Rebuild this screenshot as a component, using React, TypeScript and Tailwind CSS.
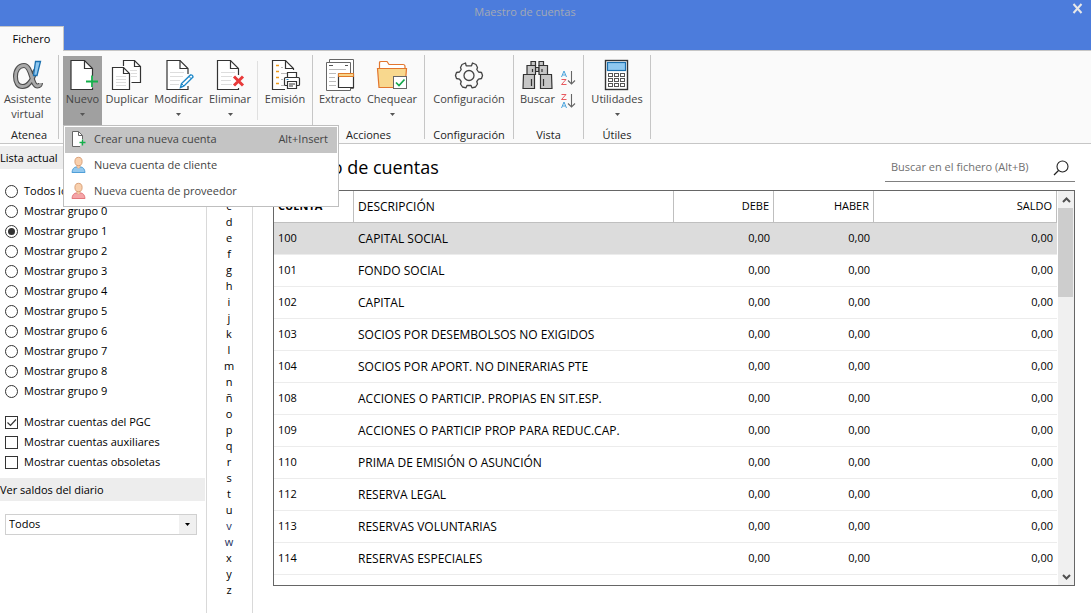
import React, { useState } from "react";
import { clsx } from "clsx";

const accounts = [
  { code: "100", name: "CAPITAL SOCIAL" },
  { code: "101", name: "FONDO SOCIAL" },
  { code: "102", name: "CAPITAL" },
  { code: "103", name: "SOCIOS POR DESEMBOLSOS NO EXIGIDOS" },
  { code: "104", name: "SOCIOS POR APORT. NO DINERARIAS PTE" },
  { code: "108", name: "ACCIONES O PARTICIP. PROPIAS EN SIT.ESP." },
  { code: "109", name: "ACCIONES O PARTICIP PROP PARA REDUC.CAP." },
  { code: "110", name: "PRIMA DE EMISIÓN O ASUNCIÓN" },
  { code: "112", name: "RESERVA LEGAL" },
  { code: "113", name: "RESERVAS VOLUNTARIAS" },
  { code: "114", name: "RESERVAS ESPECIALES" },
];

const groups = [
  "Todos los grupos",
  ...[0, 1, 2, 3, 4, 5, 6, 7, 8, 9].map((n) => `Mostrar grupo ${n}`),
];

const letters = "abcdefghijklmnñopqrstuvwxyz".split("");

/* ---------- Icons ---------- */

function Icon({ children }: { children: React.ReactNode }) {
  return (
    <svg viewBox="0 0 32 32" className="size-8 shrink-0" fill="none" aria-hidden="true">
      {children}
    </svg>
  );
}

function AlphaIcon() {
  return (
    <Icon>
      <path d="M23.500 11 C21 20 17.500 27.500 10.500 27.500 C6 27.500 3.500 23.500 3.500 17.500 C3.500 11 7 6.500 12 6.500 C20 6.500 19 27 25.500 27 C27.500 27 28.500 25.500 28.500 24" stroke="#4d4d4d" strokeWidth="5" />
      <path d="M23.500 11 C21 20 17.500 27.500 10.500 27.500 C6 27.500 3.500 23.500 3.500 17.500 C3.500 11 7 6.500 12 6.500 C20 6.500 19 27 25.500 27 C27.500 27 28.500 25.500 28.500 24" stroke="#a9a9a9" strokeWidth="2.800" />
      <path d="M23.500 2.500 H28.500 L25 16.500 H21.500 Z" fill="#8fc8f0" stroke="#1b6fae" strokeWidth="1.300" />
    </Icon>
  );
}

function NewIcon() {
  return (
    <Icon>
      <path d="M4 1.500 H17.500 L25.500 9.500 V30.500 H4 Z" fill="#fff" />
      <path d="M25.500 17 V9.500 L17.500 1.500 H4 V30.500 H25.500 V28.500" stroke="#333" strokeWidth="1.200" />
      <path d="M17.500 1.500 V9.500 H25.500" stroke="#333" strokeWidth="1.200" />
      <path d="M25 16.500 V28 M19 22.500 H31" stroke="#14b04b" strokeWidth="1.800" />
    </Icon>
  );
}

function DuplicateIcon() {
  return (
    <Icon>
      <path d="M12.500 7 V1.500 H23.500 L29.500 7.500 V23.500 H20.500" fill="#fff" stroke="#333" strokeWidth="1.200" />
      <path d="M23.500 1.500 V7.500 H29.500" stroke="#333" strokeWidth="1.200" />
      <path d="M19 11.500 H26 M20 14.500 H26 M20 17.500 H26" stroke="#ddd" />
      <path d="M1.500 8.500 H12.500 L18.500 14.500 V30.500 H1.500 Z" fill="#fff" stroke="#333" strokeWidth="1.200" />
      <path d="M12.500 8.500 V14.500 H18.500" stroke="#333" strokeWidth="1.200" />
      <path d="M5 17.500 H15 M5 20.500 H15 M5 23.500 H15 M5 26.500 H15" stroke="#ddd" />
    </Icon>
  );
}

function EditIcon() {
  return (
    <Icon>
      <path d="M25 15 V9.500 L17 1.500 H4 V30.500 H25 V27" fill="#fff" stroke="#333" strokeWidth="1.200" />
      <path d="M17 1.500 V9.500 H25" stroke="#333" strokeWidth="1.200" />
      <path d="M7 13.500 H21 M7 17.500 H20 M7 21.500 H17 M7 25.500 H16" stroke="#ddd" />
      <path d="M17.500 28.500 L18.500 24.500 L27.500 16 Q29.500 15.500 30 18 L21 27 Z" fill="#fff" stroke="#1e88c9" strokeWidth="1.400" />
      <path d="M26 17.500 L28.500 20 M18.500 24.500 L21 27" stroke="#1e88c9" />
    </Icon>
  );
}

function DeleteIcon() {
  return (
    <Icon>
      <path d="M24.500 16 V9.500 L16.500 1.500 H3.500 V30.500 H24.500 V29" fill="#fff" stroke="#333" strokeWidth="1.200" />
      <path d="M16.500 1.500 V9.500 H24.500" stroke="#333" strokeWidth="1.200" />
      <path d="M7 13.500 H21 M7 17.500 H18 M7 21.500 H17 M7 25.500 H18" stroke="#ddd" />
      <path d="M20 17.500 L29 26.500 M29 17.500 L20 26.500" stroke="#e83a3a" strokeWidth="3" />
    </Icon>
  );
}

function EmissionIcon() {
  return (
    <Icon>
      <path d="M24.500 11 V9.500 L16.500 1.500 H3.500 V30.500 H16" fill="#fff" stroke="#333" strokeWidth="1.200" />
      <path d="M16.500 1.500 V9.500 H24.500" stroke="#333" strokeWidth="1.200" />
      <path d="M7 6.500 H10 M7 12.500 H10 M7 18.500 H10 M7 24.500 H10" stroke="#f09a1a" strokeWidth="1.400" />
      <path d="M12 8.500 H14 M12 14.500 H18 M12 20.500 H14 M12 26.500 H15" stroke="#bbb" />
      <path d="M18.500 18.500 V13.500 H27.500 V18.500" fill="#fff" stroke="#333" strokeWidth="1.200" />
      <rect x="15.500" y="18.500" width="15" height="8" rx="1" fill="#fff" stroke="#333" strokeWidth="1.200" />
      <path d="M17.500 20.500 H19.500" stroke="#1e88c9" />
      <path d="M18.500 22.500 H27.500 V29.500 H18.500 Z" fill="#fff" stroke="#333" strokeWidth="1.200" />
      <path d="M20 25 H26 M20 27 H24" stroke="#333" />
    </Icon>
  );
}

function ExtractIcon() {
  return (
    <Icon>
      <path d="M5.500 3 V.5 H29.500 V29.500 H26" fill="#fff" stroke="#666" />
      <path d="M2.500 3.500 H26.500 V31.500 H2.500 Z" fill="#fff" stroke="#666" />
      <path d="M5 6.500 H9 M21 6.500 H24" stroke="#555" />
      <path d="M5 10.500 H22 M5 14.500 H12 M5 18.500 H11 M5 22.500 H12 M5 26.500 H12" stroke="#bbb" />
      <path d="M14.500 15 H29.500 V28.500 H14.500 Z" fill="#fff" stroke="#333" strokeWidth="1.200" />
      <path d="M14.500 14.500 H29.500 V17.500 H14.500 Z" fill="#f8d48a" stroke="#e07a2a" />
    </Icon>
  );
}

function CheckFolderIcon() {
  return (
    <Icon>
      <path d="M3.500 9 V3.500 Q3.500 2.500 5 2.500 H11 L13 5.500 H27 Q29 5.500 29 7.500 V10" fill="#fff" stroke="#e2762e" strokeWidth="1.200" />
      <path d="M1.500 9.500 H30.500 L29 28.500 H3 Z" fill="#f8d88e" stroke="#e2762e" strokeWidth="1.200" />
      <rect x="17.500" y="17.500" width="13" height="12" fill="#fff" stroke="#666" />
      <path d="M20 23.500 L23 26.500 L28.500 20.500" stroke="#14a84b" strokeWidth="1.700" />
    </Icon>
  );
}

function GearIcon() {
  return (
    <Icon>
      <path
        d="M13.200 6.800 L12.500 4 L9 5.500 L7.500 8.500 L8.200 10.500 L6.500 13 L3.500 13.500 L2.500 16.500 L3.500 19.500 L6.500 20.200 L8.200 22.500 L7.500 25 L9.500 28 L13 28.800 L14 26.500 H18 L19 28.800 L22.500 28 L24.500 25 L23.800 22.500 L25.500 20.200 L28.500 19.500 L29.500 16.500 L28.500 13.500 L25.500 13 L23.800 10.500 L24.500 8.500 L23 5.500 L19.500 4 L18.500 6.800 Z"
        stroke="#444"
        strokeWidth="1.300"
        strokeLinejoin="round"
      />
      <circle cx="16" cy="16.500" r="5" stroke="#444" strokeWidth="1.300" />
    </Icon>
  );
}

function BinocularsIcon() {
  return (
    <Icon>
      <g fill="#c6c6c6" stroke="#333" strokeWidth="1.200">
        <path d="M9 2.500 H13.500 V6.500 H9 Z M17 2.500 H21.500 V6.500 H17 Z" />
        <path d="M13 8.500 H17 V12.500 H13 Z" />
        <path d="M5 6.500 H13.500 V15.500 H5 Z M17 6.500 H25.500 V15.500 H17 Z" />
        <path d="M1.500 15.500 H12.500 V29.500 H1 Z M18.500 15.500 H29.500 L30 29.500 H18.500 Z" />
      </g>
      <path d="M9.500 20 V27 M21.500 20 V27 M10.500 10 V13 M20 10 V13" stroke="#333" strokeWidth="1.200" />
    </Icon>
  );
}

function CalculatorIcon() {
  return (
    <Icon>
      <rect x="4.500" y="1.500" width="22" height="29" fill="#fff" stroke="#333" strokeWidth="1.400" />
      <rect x="6.500" y="3.500" width="18" height="8" fill="#8fc8f0" stroke="#1b6fae" strokeWidth="1.200" />
      {[14.5, 19.5, 24.5].map((y) =>
        [7.5, 13.5, 19.5].map((x) => (
          <rect key={`${x}-${y}`} x={x} y={y} width="4" height="3" stroke="#555" />
        ))
      )}
    </Icon>
  );
}

function SortIcon({ desc }: { desc?: boolean }) {
  const a = desc ? 9 : 1;
  const z = desc ? 1 : 9;
  return (
    <svg viewBox="0 0 16 16" className="size-4" fill="none" aria-hidden="true">
      <path d={`M.5 ${a + 6} L3 ${a} L5.500 ${a + 6} M1.500 ${a + 4} H4.500`} stroke="#4aa3dc" />
      <path d={`M.5 ${z + 0.5} H5 L.5 ${z + 5.5} H5.500`} stroke="#e8595f" />
      <path d="M10.500 1 V14 M7 10.500 L10.500 14 L14 10.500" stroke="#666" strokeWidth="1.100" />
    </svg>
  );
}

function SmallNewIcon() {
  return (
    <svg viewBox="0 0 16 18" className="h-[18px] w-4" fill="none" aria-hidden="true">
      <path d="M11.500 9 V5.500 L7.500 1.500 H1.500 V16.500 H9" fill="#fff" stroke="#666" />
      <path d="M7.500 1.500 V5.500 H11.500" stroke="#666" />
      <path d="M11.500 9.500 V15.500 M8.500 12.500 H14.500" stroke="#14b04b" strokeWidth="1.300" />
    </svg>
  );
}

function PersonIcon({ fill, stroke }: { fill: string; stroke: string }) {
  return (
    <svg viewBox="0 0 16 18" className="h-[18px] w-4" fill="none" aria-hidden="true">
      <path d="M1 16.500 Q1.500 11.500 5 11 H10 Q13.500 11.500 14 16.500 Z" fill={fill} stroke={stroke} />
      <path d="M6 8.500 V11.500 Q7.500 13 9 11.500 V8.500" fill="#f8d0ae" stroke="#dfa780" strokeWidth=".6" />
      <ellipse cx="7.500" cy="5.500" rx="3.600" ry="4.200" fill="#f8d0ae" stroke="#d69a70" strokeWidth=".9" />
    </svg>
  );
}

function DownArrow() {
  return (
    <svg viewBox="0 0 5 3" className="h-[3px] w-[5px]" aria-hidden="true">
      <path d="M0 0 H5 L2.500 3 Z" fill="currentColor" />
    </svg>
  );
}

/* ---------- Ribbon ---------- */

function RibbonButton({
  icon,
  label,
  arrow,
  className,
}: {
  icon: React.ReactNode;
  label: React.ReactNode;
  arrow?: boolean;
  className?: string;
}) {
  return (
    <button
      type="button"
      className={clsx("flex h-[69px] flex-col items-center pt-[3px] text-[#444]", className)}
    >
      {icon}
      <span className="whitespace-nowrap leading-[15px]">{label}</span>
      {arrow && (
        <span className="mt-[7px] text-[#555]">
          <DownArrow />
        </span>
      )}
    </button>
  );
}

function RibbonGroup({
  label,
  className,
  children,
}: {
  label?: string;
  className?: string;
  children: React.ReactNode;
}) {
  return (
    <>
      <section className="flex flex-col pt-px">
        <div className={clsx("flex", className)}>{children}</div>
        <div className="mt-[3px] text-center leading-[14px] text-[#222]">{label}</div>
      </section>
      <div className="h-[84px] w-px bg-[#c6c6c6]" />
    </>
  );
}

function NewMenu() {
  const itemClass = "flex h-[26px] w-full items-center gap-[7px] pb-0.5 pl-1.5 pr-[9px] text-left";
  return (
    <div
      role="menu"
      className="absolute left-0 top-full z-10 w-[276px] border border-[#bfbfbf] bg-white p-px text-[#444]"
    >
      <button type="button" role="menuitem" className={clsx(itemClass, "bg-[#c4c4c4]")}>
        <SmallNewIcon />
        <span className="flex-1">Crear una nueva cuenta</span>
        <span>Alt+Insert</span>
      </button>
      <button type="button" role="menuitem" className={itemClass}>
        <PersonIcon fill="#93c8ee" stroke="#4f9fd8" />
        Nueva cuenta de cliente
      </button>
      <button type="button" role="menuitem" className={itemClass}>
        <PersonIcon fill="#f5a5a8" stroke="#e4787d" />
        Nueva cuenta de proveedor
      </button>
    </div>
  );
}

function Ribbon() {
  return (
    <div className="flex items-start border-y border-[#c6c6c6] bg-[#fafafa] pb-px pt-1">
      <RibbonGroup label="Atenea" className="pr-[3px]">
        <RibbonButton
          className="w-[55px]"
          icon={<AlphaIcon />}
          label={
            <>
              Asistente
              <br />
              virtual
            </>
          }
        />
      </RibbonGroup>

      <RibbonGroup className="pl-1">
        <div className="relative">
          <RibbonButton className="w-[39px] bg-[#a0a0a0]" icon={<NewIcon />} label="Nuevo" arrow />
          <NewMenu />
        </div>
        <RibbonButton className="w-[50px]" icon={<DuplicateIcon />} label="Duplicar" />
        <RibbonButton className="w-[53px]" icon={<EditIcon />} label="Modificar" arrow />
        <RibbonButton className="w-[50px]" icon={<DeleteIcon />} label="Eliminar" arrow />
        <div className="ml-0.5 mt-[5px] h-[59px] w-px bg-[#e0e0e0]" />
        <RibbonButton className="w-[54px]" icon={<EmissionIcon />} label="Emisión" />
      </RibbonGroup>

      <RibbonGroup label="Acciones" className="pr-[7px]">
        <RibbonButton className="w-[54px]" icon={<ExtractIcon />} label="Extracto" />
        <RibbonButton className="w-[50px]" icon={<CheckFolderIcon />} label="Chequear" arrow />
      </RibbonGroup>

      <RibbonGroup label="Configuración">
        <RibbonButton className="w-[88px]" icon={<GearIcon />} label="Configuración" />
      </RibbonGroup>

      <RibbonGroup label="Vista" className="pr-1.5">
        <RibbonButton className="w-[47px]" icon={<BinocularsIcon />} label="Buscar" />
        <div className="flex flex-col gap-[7px] pt-3.5">
          <button type="button" aria-label="Orden ascendente">
            <SortIcon />
          </button>
          <button type="button" aria-label="Orden descendente">
            <SortIcon desc />
          </button>
        </div>
      </RibbonGroup>

      <RibbonGroup label="Útiles">
        <RibbonButton className="w-[66px]" icon={<CalculatorIcon />} label="Utilidades" arrow />
      </RibbonGroup>
    </div>
  );
}

/* ---------- Sidebar ---------- */

function CheckRow({ label, defaultChecked }: { label: string; defaultChecked?: boolean }) {
  return (
    <label className="flex h-5 items-center gap-1.5">
      <span className="grid">
        <input
          type="checkbox"
          defaultChecked={defaultChecked}
          className="peer size-[13px] appearance-none border border-[#333] bg-white [grid-area:1/1]"
        />
        <svg
          viewBox="0 0 13 13"
          className="pointer-events-none invisible size-[13px] [grid-area:1/1] peer-checked:visible"
          fill="none"
        >
          <path d="M2.500 6.500 L5.500 9.500 L11 3.500" stroke="#333" strokeWidth="1.200" />
        </svg>
      </span>
      {label}
    </label>
  );
}

function Sidebar() {
  const [group, setGroup] = useState(2);

  return (
    <aside className="w-[207px] shrink-0 border-r border-[#d9d9d9] pt-0.5">
      <h2 className="mr-px h-[23px] bg-[#ededed] leading-[23px]">Lista actual</h2>
      <fieldset className="pl-[5px] pt-3">
        {groups.map((name, i) => (
          <label key={name} className="flex h-5 items-center gap-1.5">
            <input
              type="radio"
              name="group"
              checked={group === i}
              onChange={() => setGroup(i)}
              className="grid size-[13px] appearance-none place-content-center rounded-full border border-[#333] bg-white before:size-[7px] before:rounded-full before:content-[''] checked:before:bg-[#333]"
            />
            {name}
          </label>
        ))}
      </fieldset>
      <div className="pl-[5px] pt-[11px]">
        <CheckRow label="Mostrar cuentas del PGC" defaultChecked />
        <CheckRow label="Mostrar cuentas auxiliares" />
        <CheckRow label="Mostrar cuentas obsoletas" />
      </div>
      <h2 className="mr-px mt-1.5 h-[23px] bg-[#ededed] leading-[23px]">
        <label htmlFor="diario">Ver saldos del diario</label>
      </h2>
      <div className="ml-[5px] mr-[9px] mt-[13px] grid h-[21px] border border-[#d0d0d0]">
        <select id="diario" className="appearance-none bg-white pl-[3px] [grid-area:1/1]">
          <option>Todos</option>
        </select>
        <span className="pointer-events-none flex w-[17px] items-center justify-center justify-self-end bg-[#f0f0f0] text-black [grid-area:1/1]">
          <DownArrow />
        </span>
      </div>
    </aside>
  );
}

function LetterIndex() {
  return (
    <nav className="flex w-[46px] shrink-0 flex-col border-r border-[#d9d9d9] pr-px pt-[22px] text-center">
      {letters.map((l) => (
        <a key={l} href={`#${l}`} className={clsx("h-4 leading-4", l === "v" || l === "w" ? "text-[#1c2f5c]" : "text-black")}>
          {l}
        </a>
      ))}
    </nav>
  );
}

/* ---------- Accounts ---------- */

function AccountsTable() {
  return (
    <div className="flex flex-1 border border-[#666]">
      <div className="mr-px flex-1">
        <table className="w-full table-fixed border-separate border-spacing-0">
          <colgroup>
            <col className="w-20" />
            <col />
            <col className="w-[100px]" />
            <col className="w-[100px]" />
            <col className="w-[183px]" />
          </colgroup>
          <thead>
            <tr className="h-8 text-left [&>th]:border-b [&>th]:border-r [&>th]:border-[#bfbfbf] [&>th]:px-1 [&>th]:font-normal">
              <th>
                <b>CUENTA</b>
              </th>
              <th className="text-[12px]">DESCRIPCIÓN</th>
              <th className="text-right">DEBE</th>
              <th className="text-right">HABER</th>
              <th className="text-right">SALDO</th>
            </tr>
          </thead>
          <tbody>
            {accounts.map((a, i) => (
              <tr
                key={a.code}
                className={clsx("h-8 [&>td]:border-b [&>td]:border-[#ececec] [&>td]:px-1", i === 0 && "bg-[#dcdcdc]")}
              >
                <td>{a.code}</td>
                <td className="text-[12px]">{a.name}</td>
                <td className="text-right">0,00</td>
                <td className="text-right">0,00</td>
                <td className="text-right">0,00</td>
              </tr>
            ))}
          </tbody>
        </table>
      </div>
      <div className="flex w-4 flex-col bg-[#f0f0f0]">
        <button type="button" aria-label="Subir" className="flex h-[17px] items-center justify-center">
          <svg viewBox="0 0 9 6" className="h-1.5 w-[9px]" fill="none">
            <path d="M1 5 L4.500 1.500 L8 5" stroke="#505050" strokeWidth="2" />
          </svg>
        </button>
        <div className="mr-px h-[89px] bg-[#cdcdcd]" />
        <button type="button" aria-label="Bajar" className="mt-auto flex h-[17px] items-center justify-center">
          <svg viewBox="0 0 9 6" className="h-1.5 w-[9px]" fill="none">
            <path d="M1 1 L4.500 4.500 L8 1" stroke="#505050" strokeWidth="2" />
          </svg>
        </button>
      </div>
    </div>
  );
}

export default function App() {
  return (
    <div className="flex min-h-screen flex-col bg-white font-['Open_Sans','Noto_Sans',sans-serif] text-[11px] text-black">
      <header className="bg-[#4c7cdc]">
        <div className="flex h-[26px] items-start">
          <h1 className="flex-1 text-center leading-6 text-[#a3a9b5]">Maestro de cuentas</h1>
          <button type="button" aria-label="Cerrar" className="flex w-[41px] justify-end pr-2 pt-[3px]">
            <svg viewBox="0 0 11 11" className="size-[11px]" fill="none">
              <path d="M1.500 1 L9.500 10 M9.500 1 L1.500 10" stroke="#e8e8e8" strokeWidth="2" />
            </svg>
          </button>
        </div>
        <div className="flex h-6">
          <button
            type="button"
            className="relative -mb-px w-16 border-r border-t border-[#c6c6c6] bg-[#fafafa] text-center"
          >
            Fichero
          </button>
        </div>
      </header>

      <Ribbon />

      <div className="flex flex-1">
        <Sidebar />
        <LetterIndex />
        <main className="flex flex-1 flex-col pb-[27px] pl-5 pr-4">
          <div className="flex h-[46px] items-start justify-between pt-2.5">
            <h2 className="text-[18px] leading-[26px]">Maestro de cuentas</h2>
            <div className="flex h-7 w-[190px] items-center border-b border-[#808080] pl-1.5 pr-1.5">
              <input
                type="text"
                aria-label="Buscar en el fichero"
                placeholder="Buscar en el fichero (Alt+B)"
                className="min-w-0 flex-1 outline-none placeholder:text-[#707070]"
              />
              <svg viewBox="0 0 16 16" className="size-4" fill="none" aria-hidden="true">
                <circle cx="9.500" cy="6.500" r="5.500" stroke="#222" strokeWidth="1.100" />
                <path d="M5.500 10.500 L1 15" stroke="#222" strokeWidth="1.200" />
              </svg>
            </div>
          </div>
          <AccountsTable />
        </main>
      </div>
    </div>
  );
}
